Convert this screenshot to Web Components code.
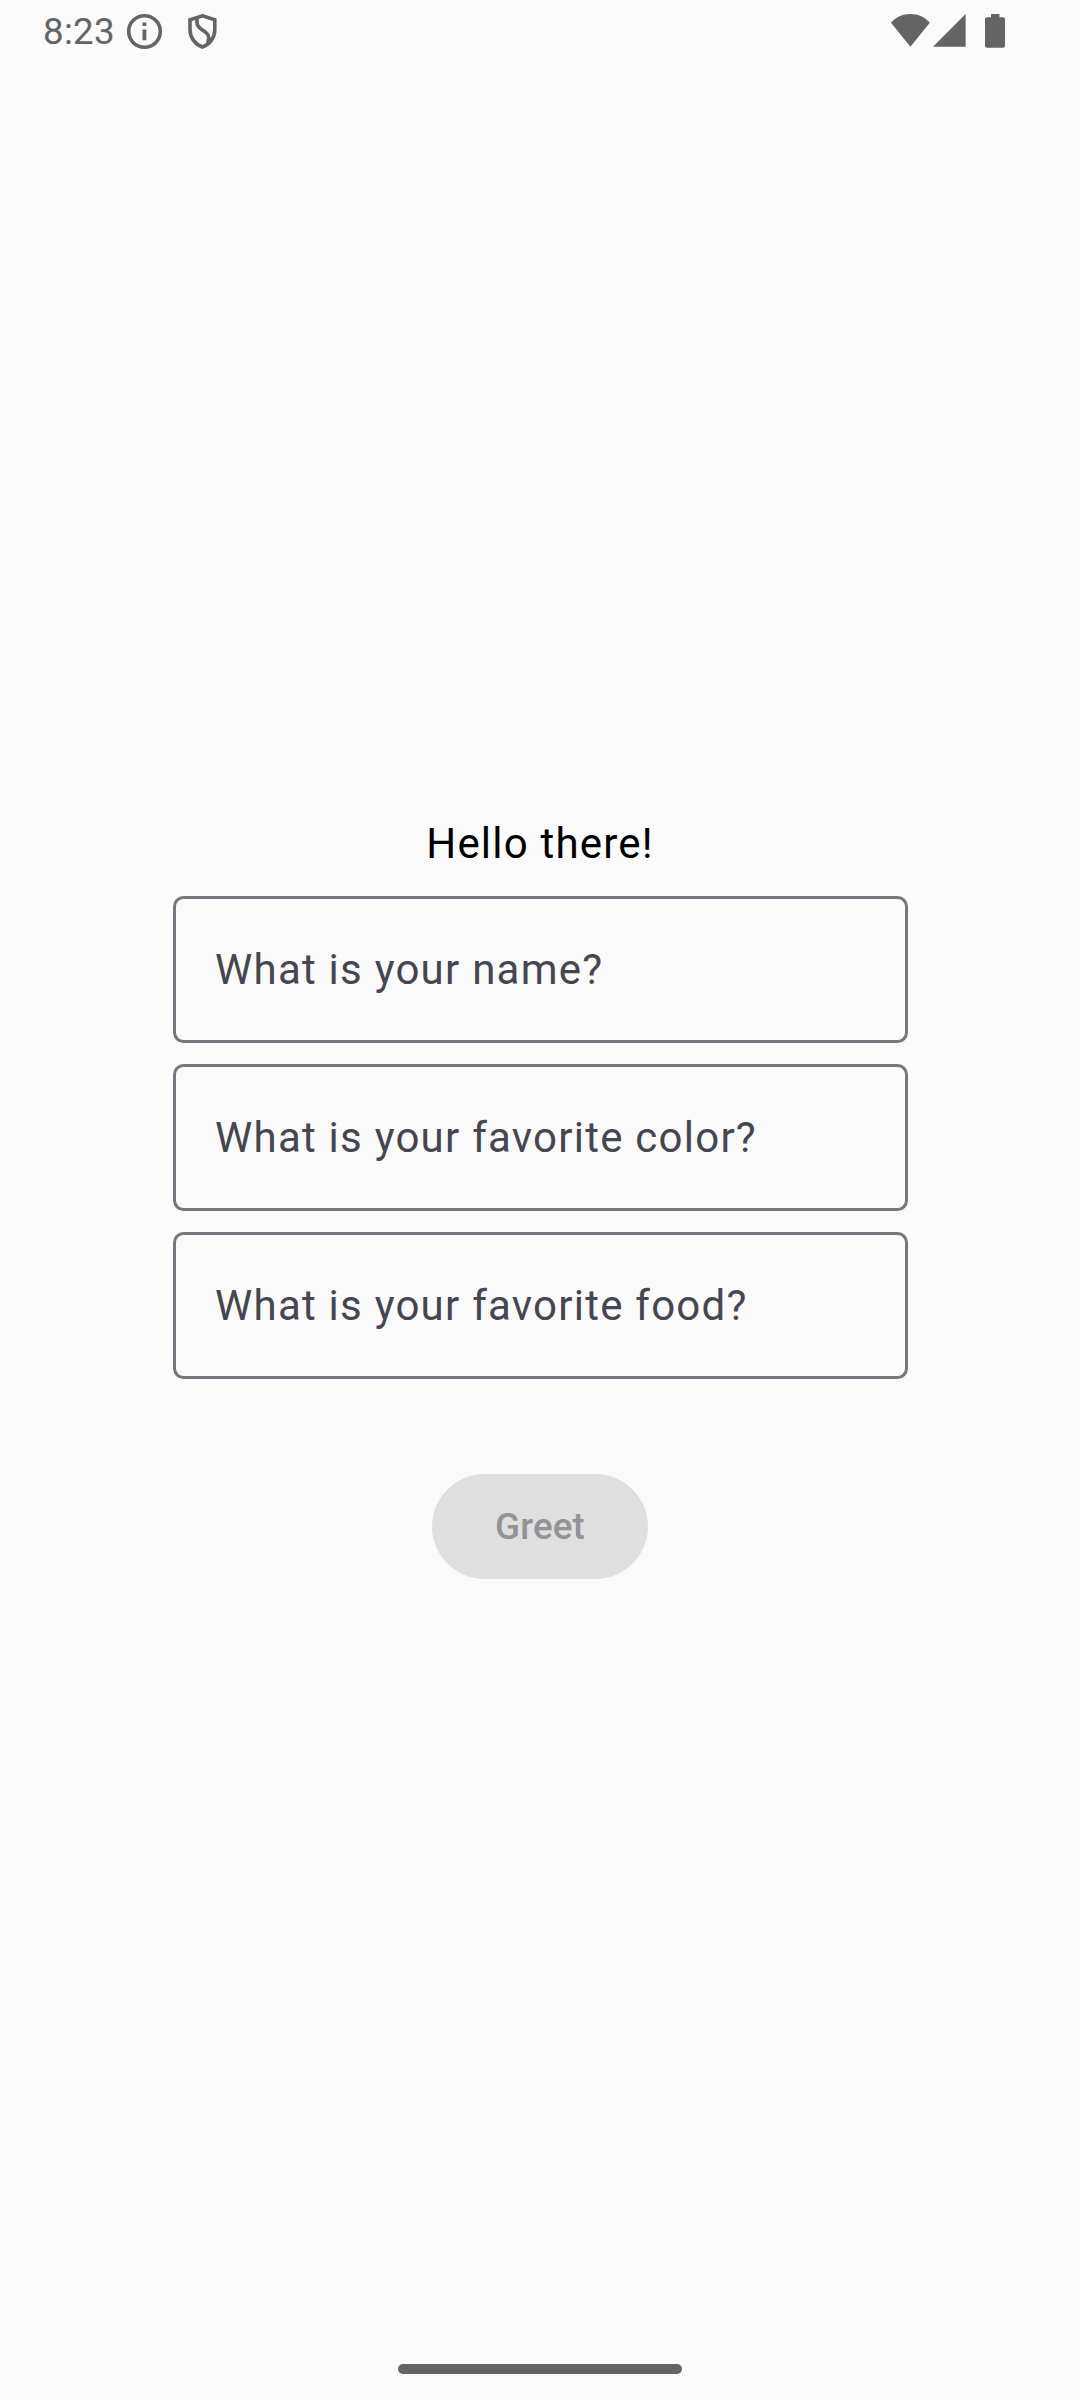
<!DOCTYPE html>
<html lang="en">
<head>
<meta charset="utf-8">
<title>Greeting</title>
<style>
html, body { margin: 0; height: 100%; background: #fafafa; }
body { font-family: Roboto, sans-serif; }
</style>
</head>
<body>
<greeting-screen></greeting-screen>
<script>
const define = (name, markup) => customElements.define(name, class extends HTMLElement {
  constructor() {
    super();
    this.attachShadow({ mode: "open" }).innerHTML = markup;
  }
});

define("status-bar", `
<style>
:host { display: flex; justify-content: space-between; height: 63px; box-sizing: border-box; padding: 0 75px 0 43px; color: #646464; }
div { display: flex; align-items: flex-start; }
time { font-size: 36.75px; line-height: 63px; width: 83px; letter-spacing: .25px; white-space: nowrap; }
svg { display: block; flex: none; margin-top: 13px; fill: currentColor; }
</style>
<div>
  <time>8:23</time>
  <svg width="37" height="37" viewBox="0 0 37 37"><circle cx="18.5" cy="18.5" r="15.8" fill="none" stroke="currentColor" stroke-width="3.6"/><path d="M16.5 9.4h3.8v3.6h-3.8zM16.5 16.4h3.8v10.8h-3.8z"/></svg>
  <svg width="32" height="37" viewBox="0 0 32 37" style="margin-left:24px"><path d="M15.4 2.8 27.8 6.8V16.8C27.8 24.4 22.6 31.7 15.4 34 8.2 31.7 3 24.4 3 16.8V6.8Z M10 4.5V9.5C10 13 11.6 14.4 14.6 16.4L17.6 18.4C20.8 20.6 22 22.6 21.6 25.6L20.8 30.5" fill="none" stroke="currentColor" stroke-width="3.6"/></svg>
</div>
<div>
  <svg width="40" height="35" viewBox="0 0 40 35"><path d="M1 9.8C6 4 12.5 1 20.4 1S35 4 39.8 9.8L20.4 33.7Z"/></svg>
  <svg width="33" height="35" viewBox="0 0 33 35" style="margin-left:3px"><path d="M0 33.7 32.6 1V33.7Z"/></svg>
  <svg width="20" height="36" viewBox="0 0 20 36" style="margin-left:19px"><path d="M6 1H14.5V4.3H18Q20 4.3 20 6.3V32.8Q20 34.8 18 34.8H2Q0 34.8 0 32.8V6.3Q0 4.3 2 4.3H6Z"/></svg>
</div>`);

define("outlined-field", `
<style>
:host { display: flex; align-items: center; box-sizing: border-box; width: 735px; height: 147px; padding: 0 39px; border: 3px solid #757780; border-radius: 10.5px; color: #45464f; font-size: 42px; line-height: 63px; letter-spacing: 1.24px; white-space: nowrap; }
</style><slot></slot>`);

define("pill-button", `
<style>
button { display: block; box-sizing: border-box; width: 216px; height: 105px; padding: 1px 0 0; border: 0; border-radius: 52.5px; background: #dfdfdf; color: #939397; font: 500 36.75px/52.5px Roboto, sans-serif; letter-spacing: .1px; }
</style><button disabled><slot></slot></button>`);

define("nav-handle", `
<style>
:host { display: flex; justify-content: center; height: 63px; box-sizing: border-box; padding-top: 27px; }
i { width: 284px; height: 10px; border-radius: 5px; background: #646464; }
</style><i></i>`);

define("greeting-screen", `
<style>
:host { display: flex; flex-direction: column; width: 1080px; height: 2400px; background: #fafafa; }
main { flex: 1; display: flex; flex-direction: column; align-items: center; padding-top: 749px; box-sizing: border-box; }
p { margin: 0 0 21px; font-size: 42px; line-height: 63px; letter-spacing: 1.2px; color: #000; }
section { display: flex; flex-direction: column; gap: 21px; padding-left: 1px; margin-bottom: 95px; }
</style>
<status-bar></status-bar>
<main>
  <p>Hello there!</p>
  <section>
    <outlined-field>What is your name?</outlined-field>
    <outlined-field>What is your favorite color?</outlined-field>
    <outlined-field>What is your favorite food?</outlined-field>
  </section>
  <pill-button>Greet</pill-button>
</main>
<nav-handle></nav-handle>`);
</script>
</body>
</html>
